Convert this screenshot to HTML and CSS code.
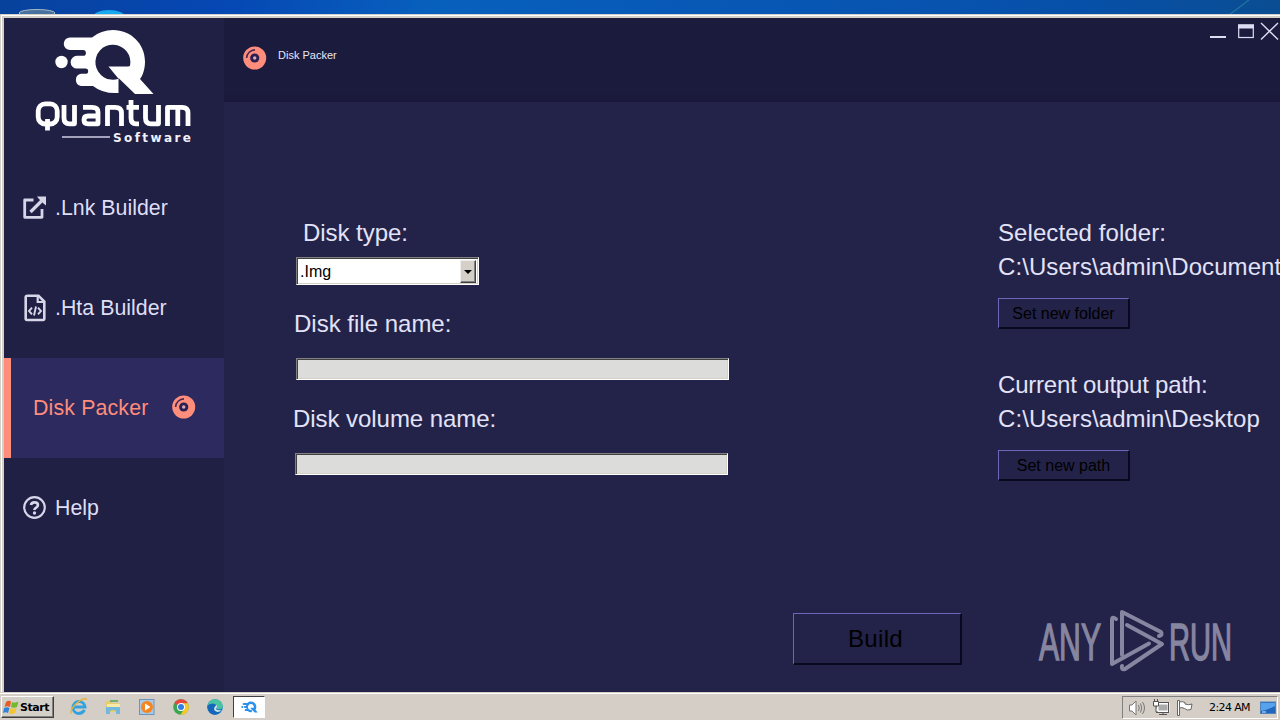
FILE: index.html
```html
<!DOCTYPE html>
<html lang="en">
<head>
<meta charset="utf-8">
<title>Disk Packer</title>
<link rel="stylesheet" href="styles.css">
</head>
<body>
<svg class="defs" width="0" height="0">
  <symbol id="disc" viewBox="0 0 24 24">
    <circle cx="11.700" cy="12" r="11.500" fill="#ff8d7c"/>
    <circle cx="11.700" cy="12" r="4.600" fill="#2b2051"/>
    <circle cx="11.700" cy="12" r="1.700" fill="#d5acc0"/>
    <path d="M3.600 12A8.400 8.400 0 0 1 12 3.900" fill="none" stroke="#4a2850" stroke-width="1.600"/>
  </symbol>
  <symbol id="qmark" viewBox="54 29 101 66">
    <path d="M70 37.500H92Q101 30 113 30C131 30 145 44 145 61.500C145 69 143 75 140 79L153.500 94H135L118.500 78V93Q103 94 93 86H81A6.200 6.200 0 0 1 81 73.800H85.500A2.400 2.400 0 0 0 85.500 68.500H77A6.300 6.300 0 0 1 77 55.800H83A2.600 2.600 0 0 0 83 50H70A6.250 6.250 0 0 1 70 37.500Z" fill="currentColor"/>
    <path class="qhole" d="M118.500 78.800A17.500 17.500 0 1 1 130 66L128 66.500H108.500Z"/>
    <circle cx="61.500" cy="62" r="6.200" fill="currentColor"/>
  </symbol>
</svg>
<div class="screen">
  <div class="desktop">
    <svg width="1280" height="14">
      <ellipse cx="37" cy="13" rx="18" ry="3.500" fill="#47719e" stroke="#a9b8c5" stroke-width="1"/>
      <ellipse cx="109" cy="17" rx="16" ry="7" fill="#16aaf0"/>
      <path d="M1229 15L1249 0" stroke="#2680a0" stroke-width="1.500" opacity=".7"/>
    </svg>
  </div>
  <div class="window">
    <aside class="sidebar">
      <svg class="logo" width="220" height="140" viewBox="4 18 220 140">
        <svg x="54" y="29" width="101" height="66"><use href="#qmark"/></svg>
        <g class="wordmark">
          <rect x="38.200" y="103.800" width="19" height="20.200" rx="7"/>
          <path d="M47.500 119V130.500"/>
          <path d="M64 105V118Q64 123.800 69.500 123.800H74.500V105"/>
          <path d="M83 107.300H92Q98 107.300 98 112V123.800H88Q84 123.800 84 120Q84 116 88 116H97"/>
          <path d="M107.500 126V107.300H115Q121.500 107.300 121.500 113V126"/>
          <path d="M131 100V118Q131 123.800 136 123.800H139M126.500 107.300H139"/>
          <path d="M145.500 105V118Q145.500 123.800 151 123.800H158.500V105"/>
          <path d="M167.500 126V107.300H182Q188 107.300 188 113V126M177.800 108V126"/>
        </g>
        <path d="M62 137H110" stroke="#cfcfe2" stroke-width="1.600"/>
        <text class="logo-sub" x="113" y="142" textLength="78" lengthAdjust="spacing">Software</text>
      </svg>
      <nav class="menu">
        <a class="item">
          <svg class="item-icon" width="24" height="24" viewBox="0 0 24 24" fill="none" stroke="currentColor" stroke-width="2.800"><path d="M10.500 4H1.700V21.300H19V13" stroke-linejoin="round"/><path d="M7.500 16L18.500 5" stroke-width="3.200"/><path d="M14 .5H23V9.500L20.500 7.500L16 3Z" fill="currentColor" stroke="none"/></svg>
          <span>.Lnk Builder</span>
        </a>
        <a class="item">
          <svg class="item-icon" width="24" height="28" viewBox="0 0 24 28" fill="none" stroke="currentColor" stroke-width="2.200"><path d="M4.500 1.700H15.500L21.300 7.500V24.500Q21.300 26 20 26H4Q2.700 26 2.700 24.500V3Q2.700 1.700 4.500 1.700Z" stroke-width="2.600"/><path d="M14.700 2V8H21"/><path d="M9 13.700L6 17L9 20.300M15 13.700L18 17L15 20.300M13 12.500L11 21.500" stroke-width="1.900"/></svg>
          <span>.Hta Builder</span>
        </a>
        <a class="item active">
          <span>Disk Packer</span>
          <svg class="disc" width="24" height="24"><use href="#disc"/></svg>
        </a>
        <a class="item help">
          <svg class="item-icon" width="24" height="24" viewBox="0 0 24 24" fill="none" stroke="currentColor"><circle cx="11.500" cy="11.500" r="10.300" stroke-width="2.200"/><path d="M8 9Q8.300 6.300 11.500 6.300Q14.900 6.300 14.900 9.100Q14.900 10.700 13.200 11.600Q11.500 12.500 11.500 14" stroke-width="2.700"/><circle cx="11.500" cy="17" r="1.700" fill="currentColor" stroke="none"/></svg>
          <span>Help</span>
        </a>
      </nav>
    </aside>
    <section class="main">
      <header class="header">
        <svg width="24" height="24"><use href="#disc"/></svg>
        <h1>Disk Packer</h1>
        <svg class="controls" width="72" height="20" viewBox="1208 22 72 20" fill="none" stroke="#dcdcf2"><path d="M1210 37H1226" stroke-width="2"/><rect x="1238.700" y="25" width="14.600" height="12.500" stroke-width="1.200"/><path d="M1238 26.500H1254" stroke-width="4"/><path d="M1261 23L1278 39.500M1278 23L1261 39.500" stroke-width="1.400"/></svg>
      </header>
      <div class="content">
        <form class="fields">
          <label class="type-label">Disk type:</label>
          <div class="select"><span>.Img</span><i class="drop"><svg width="8" height="4"><path d="M0 0H8L4 4Z"/></svg></i></div>
          <label class="file-label">Disk file name:</label>
          <div class="input"></div>
          <label class="volume-label">Disk volume name:</label>
          <div class="input volume"></div>
        </form>
        <div class="paths">
          <p>Selected folder:</p>
          <p>C:\Users\admin\Document</p>
          <button class="btn">Set new folder</button>
          <p class="output-title">Current output path:</p>
          <p>C:\Users\admin\Desktop</p>
          <button class="btn">Set new path</button>
        </div>
        <div class="bottom">
          <button class="btn build">Build</button>
          <svg class="watermark" width="200" height="64" viewBox="1037 609 200 64">
            <text x="1039" y="660" textLength="62" lengthAdjust="spacingAndGlyphs">ANY</text>
            <text x="1169" y="660" textLength="63" lengthAdjust="spacingAndGlyphs">RUN</text>
            <g fill="none" stroke="#8786a0" stroke-width="4" stroke-linejoin="round" stroke-linecap="round"><path d="M1116 619Q1112 616 1112 620V664L1149 643.500"/><path d="M1122 655V612L1161 632Q1163 635 1159 636"/><path d="M1127 625L1162 644L1125 669Q1121 670 1122 666"/></g>
          </svg>
        </div>
      </div>
    </section>
  </div>
  <footer class="taskbar">
    <button class="start"><svg width="17" height="17" viewBox="0 0 17 17"><path d="M3 3Q6 1 8 2.500L7 8Q4 6.500 1.500 8Z" fill="#e85b25"/><path d="M9 3Q12 4.500 15.500 2.500L14 8Q11 9.500 8 8Z" fill="#75b82b"/><path d="M1 9Q4 7.500 6.500 9L5 14Q2.500 12.500 0 14Z" fill="#3183d8"/><path d="M7.500 9Q11 10.500 13.500 9L12 14Q8.500 16 6 14Z" fill="#f5c433"/></svg><span>Start</span></button>
    <div class="launch">
      <svg width="18" height="18" viewBox="0 0 18 18" fill="none"><path d="M14.500 12Q12.500 15.500 8.500 15.500A6 6 0 1 1 15 9H4" stroke="#34a2df" stroke-width="3"/><path d="M1 15.500Q0 11 7 5T17 1.500" stroke="#e2b43e" stroke-width="1.500"/></svg>
      <svg width="18" height="18" viewBox="0 0 18 18"><path d="M1.500 3H7L8.500 5H16V14H1.500Z" fill="#e8cc70"/><path d="M3 6H16V12H3Z" fill="#f9e9a8"/><path d="M2 9H16V16H12V13Q9 11 6 13V16H2Z" fill="#72b9dc"/><path d="M6 3H14" stroke="#54a556" stroke-width="1.500"/></svg>
      <svg width="18" height="18" viewBox="0 0 18 18"><rect x="1.500" y="1.500" width="14.500" height="15" fill="#a9c9e4" stroke="#6b96ba"/><circle cx="9" cy="9" r="6" fill="#f38522"/><path d="M7 5.500L12.500 9L7 12.500Z" fill="#fff"/></svg>
      <svg width="18" height="18" viewBox="0 0 18 18"><circle cx="9" cy="9" r="7.800" fill="#3ba64e"/><path d="M9 9L2.200 5.200A7.800 7.800 0 0 1 15.800 5.200H9Z" fill="#e7473c"/><path d="M9 5.200H15.800A7.800 7.800 0 0 1 8.500 16.800L12.200 11Z" fill="#f8c729"/><circle cx="9" cy="9" r="4" fill="#fff"/><circle cx="9" cy="9" r="3" fill="#337de4"/></svg>
      <svg width="18" height="18" viewBox="0 0 18 18"><circle cx="9" cy="9" r="7.800" fill="#177bc9"/><path d="M1.500 8Q3 1 9.500 1.200Q16.500 2 16.800 8Q16.500 11.500 12 11.200Q10 11 11 9Q10.500 5.500 6.500 5.500Q3 5.500 1.500 8Z" fill="#49c4a1"/><path d="M1.500 8Q6 4 10.500 7.500Q8 8 8 11Q9 15 14.500 14.500Q9 18.500 4 15Q1 12 1.500 8Z" fill="#1667b9"/><path d="M11 9Q8 13 15.500 12.200Q12 15.500 8.500 12.500Q7 9 11 7Z" fill="#d4dfe5"/></svg>
    </div>
    <div class="task"><svg width="17" height="12"><use href="#qmark"/></svg></div>
    <div class="tray">
      <svg width="18" height="18" viewBox="0 0 18 18" fill="none" stroke="#777" stroke-width="1"><path d="M1.500 6H4L8 2V16L4 12H1.500Z" fill="#fff"/><path d="M10.500 6Q12 9 10.500 12M12.500 4.500Q15 9 12.500 13.500M14.500 3Q18.500 9 14.500 15"/></svg>
      <svg width="18" height="18" viewBox="0 0 18 18" fill="none" stroke="#555"><rect x="5.500" y="4.500" width="11" height="8" fill="#aaa" stroke="#fff" stroke-width="2"/><rect x="4.500" y="3.500" width="12" height="10"/><path d="M7 15.500H15M11 13V16M1.500 2.500H6.500V7H1.500ZM2.500 0V2M5.500 0V2M4 7V13H6" fill="#fff"/></svg>
      <svg width="18" height="18" viewBox="0 0 18 18" fill="#fff" stroke="#666"><path d="M1.500 1.500H3.500V16.500H1.500ZM3.500 3Q6 2 9 3.500V5Q13 6.500 16 5L15 10.500Q11 12 8.500 9.500Q6 8 3.500 9Z"/></svg>
      <time>2:24 AM</time>
      <svg width="16" height="14" viewBox="0 0 16 14"><rect x=".5" y="1" width="15" height="11.500" fill="#2265bc" stroke="#4f83bd"/><path d="M1 2H15V5Q8 9 1 10Z" fill="#58a2ed"/><path d="M2 11H6" stroke="#d3e8fa"/></svg>
    </div>
  </footer>
</div>
</body>
</html>
```
FILE: styles.css
```css
* { box-sizing: border-box; }
body { margin: 0; font-family: "Liberation Sans", Arial, sans-serif; }
svg { display: block; flex: none; }
.defs { display: none; }
.screen { width: 1280px; height: 720px; overflow: hidden; display: flex; flex-direction: column; background: #d4d0c8; }
.desktop { height: 14px; flex: none; background: linear-gradient(90deg, #07429c 0, #0647b4 220px, #0860bd 430px, #0857b5 750px, #0750a9 1080px, #0a4d92 1280px); }
.window { height: 678px; flex: none; display: flex; padding: 4px 0 0 4px; background: #d4d0c8; box-shadow: inset 1px 1px #d4d0c8, inset 2px 2px #fff; }

.sidebar { width: 220px; flex: none; background: #201f44; }
.qhole { fill: var(--hole, #201f44); }
.wordmark { fill: none; stroke: #fff; stroke-width: 4.8; stroke-linejoin: round; }
.logo { color: #fff; }
.logo-sub { font: bold 12px "DejaVu Sans", sans-serif; fill: #f0f0f8; }
.menu { display: flex; flex-direction: column; }
.item { height: 100px; display: flex; align-items: center; gap: 8px; padding-left: 19px; color: #dedef5; font-size: 21.33px; letter-spacing: .02px; white-space: nowrap; }
.item-icon { color: #d6d6e8; }
.active { background: #2c2a5f; border-left: 7px solid #ff8d7c; color: #ff8d7c; padding-left: 22px; gap: 0; letter-spacing: .15px; }
.active .disc { margin: 0 0 3px 24px; }

.main { flex: 1; min-width: 0; background: #232248; display: flex; flex-direction: column; }
.header { height: 84px; flex: none; display: flex; background: linear-gradient(#1b1b3e 75px, #19183a); padding: 28px 0 0 19px; }
.header h1 { margin: 3px 0 0 11px; font-size: 11px; line-height: 13px; font-weight: normal; color: #e6e6f8; }
.controls { margin: -24px 0 0 auto; }

.content { flex: 1; display: grid; grid-template-columns: 703px 1fr; grid-template-rows: 511px 1fr; padding-left: 71px; color: #e2e2f8; font-size: 24px; line-height: 34px; white-space: nowrap; }
.fields, .paths { display: flex; flex-direction: column; align-items: flex-start; padding-top: 114px; }
.type-label { margin-left: 8px; letter-spacing: -.05px; }
.file-label { margin: 22px 0 0 -1px; }
.volume-label { margin: 22px 0 0 -2px; letter-spacing: -.05px; }
.select { width: 183px; height: 28px; margin: 7px 0 0 1px; display: flex; background: #fff; border: 1px solid; border-color: #808080 #fff #fff #808080; box-shadow: inset 1px 1px #404040, inset -1px -1px #d4d0c8; color: #000; font-size: 16px; line-height: 26px; padding: 1px 2px 1px 3px; }
.drop { width: 16px; height: 23px; margin: 1px 0 0 auto; display: grid; place-items: center; background: #d4d0c8; border: 1px solid; border-color: #eee #404040 #404040 #eee; box-shadow: inset -1px -1px #808080; }
.input { width: 433px; height: 22px; margin: 17px 0 0 1px; background: #dcdcda; border: 1px solid; border-color: #808080 #fff #fff #808080; box-shadow: inset 1px 1px #404040, inset -1px -1px #d4d0c8; }
.input.volume { margin-left: 0; }
.paths p { margin: 0; letter-spacing: .08px; }
.paths .output-title { letter-spacing: -.2px; }
.btn { width: 132px; height: 31px; margin: 14px 0 39px; padding: 0; background: transparent; border: solid; border-width: 1px 2px 2px 1px; border-color: #6a66b8 #09081d #09081d #6a66b8; color: #000; font: 16px/27px "Liberation Sans", Arial, sans-serif; }
.bottom { grid-column: 1 / -1; display: flex; }
.build { width: 169px; height: 52px; margin: 0 0 0 498px; padding-right: 3px; font-size: 24px; line-height: 48px; letter-spacing: .3px; }
.watermark { margin: -4px 0 0 75px; }
.watermark text { font: 52px "Liberation Sans", Arial, sans-serif; fill: #8786a0; stroke: #8786a0; stroke-width: 1.5; }

.taskbar { height: 28px; flex: none; background: #d4cec6; border-top: 1px solid #d4d0c8; box-shadow: inset 0 1px #fff; display: flex; align-items: flex-start; padding-top: 3px; }
.start { width: 53px; height: 22px; margin-left: 1px; padding: 0 0 0 1px; display: flex; align-items: center; background: #d4d0c8; border: 1px solid; border-color: #fff #404040 #404040 #fff; box-shadow: inset -1px -1px #808080; color: #000; font: bold 11px "DejaVu Sans", sans-serif; letter-spacing: -.45px; }
.launch { display: flex; gap: 16px; margin: 2px 0 0 16px; }
.task { --hole: #fff; width: 32px; height: 22px; margin-left: 9px; display: grid; place-items: center; background: #fff; border: 1px solid; border-color: #404040 #fff #fff #404040; color: #2b91ea; }
.tray { width: 156px; height: 23px; margin-left: auto; margin-right: 2px; display: flex; align-items: center; gap: 6px; padding: 0 1px 0 5px; border: 1px solid; border-color: #808080 #fff #fff #808080; }
.tray time { margin-left: 9px; color: #000; font: 11px "DejaVu Sans", sans-serif; letter-spacing: -.6px; white-space: nowrap; width: 42px; }
.tray time + svg { margin-left: auto; }
```
